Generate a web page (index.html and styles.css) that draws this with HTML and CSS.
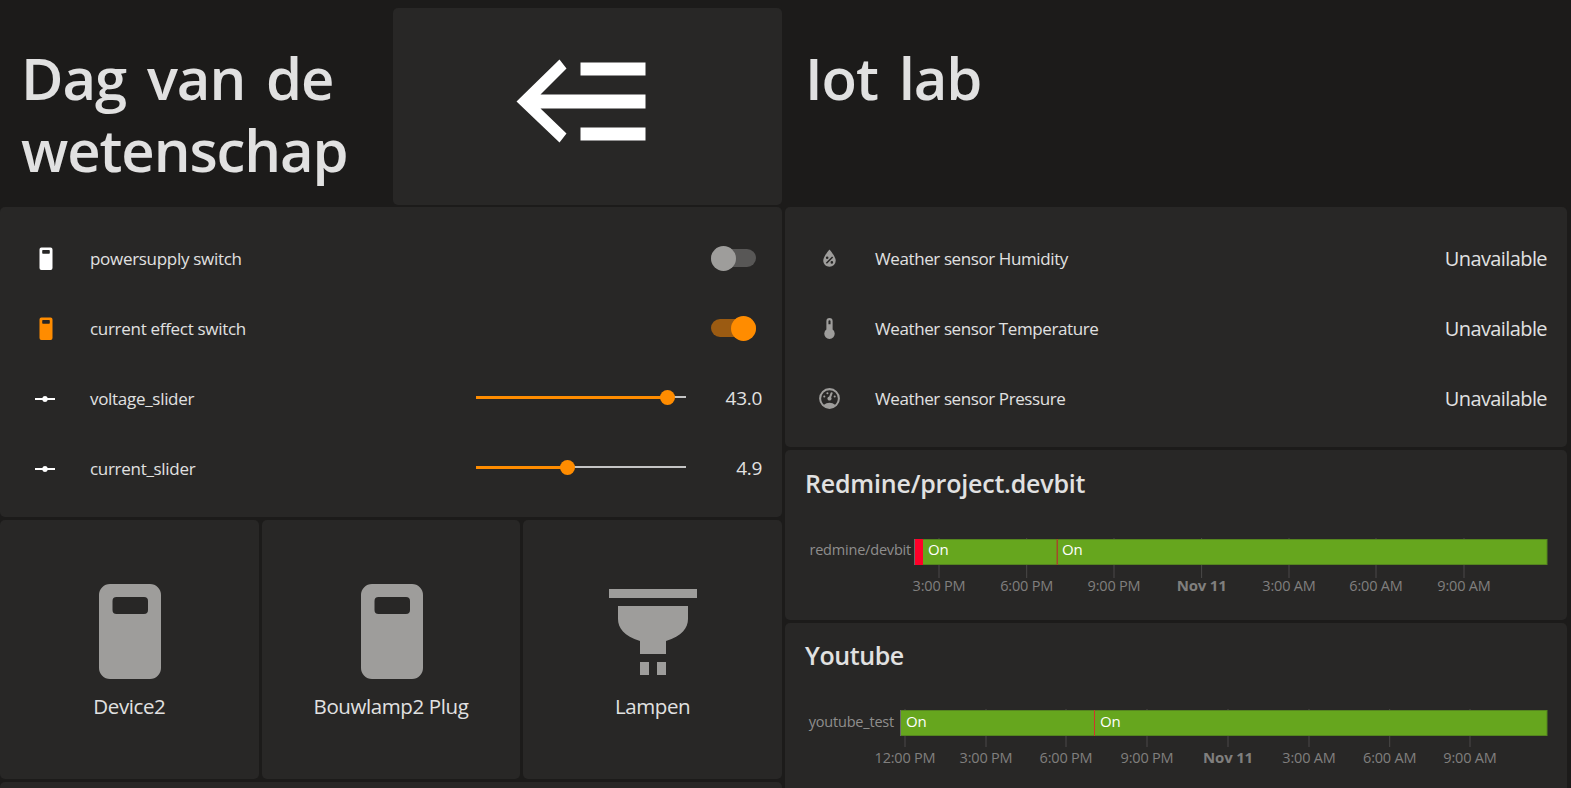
FILE: index.html
```html
<!DOCTYPE html>
<html>
<head>
	<meta charset="utf-8">
	<title>Dag van de wetenschap</title>
	<link rel="stylesheet" href="styles.css">
</head>
<body>
<div class="dashboard">
	<div class="column">
		<div class="top-row">
			<h1 class="big-title">Dag van de wetenschap</h1>
			<div class="card back-button">
				<svg class="back-icon" viewBox="0 0 160 160"><path d="M9.5 74.5 52.5 32.5 59.500 41.500 33.500 67.500H138.500V81.500H33.500L59.500 106.500 52.500 115.500ZM73.500 35.500H138.500V48.500H73.500ZM73.500 100.500H138.500V113.500H73.500Z"/></svg>
			</div>
		</div>

		<div class="card entities">
			<div class="row">
				<svg class="row-icon icon-white" viewBox="0 0 24 24"><path fill-rule="evenodd" d="M7.400 1.500H16.600A1.900 1.900 0 0 1 18.500 3.400V22.100A1.900 1.900 0 0 1 16.600 24H7.400A1.900 1.900 0 0 1 5.500 22.100V3.400A1.900 1.900 0 0 1 7.400 1.500ZM9 4A.8.8 0 0 0 8.200 4.800V7A.8.8 0 0 0 9 7.800H15A.8.8 0 0 0 15.800 7V4.800A.8.8 0 0 0 15 4Z"/></svg>
				<span class="row-name">powersupply switch</span>
				<span class="toggle"><span class="knob"></span></span>
			</div>
			<div class="row">
				<svg class="row-icon icon-orange" viewBox="0 0 24 24"><path fill-rule="evenodd" d="M7.400 1.500H16.600A1.900 1.900 0 0 1 18.500 3.400V22.100A1.900 1.900 0 0 1 16.600 24H7.400A1.900 1.900 0 0 1 5.500 22.100V3.400A1.900 1.900 0 0 1 7.400 1.500ZM9 4A.8.8 0 0 0 8.200 4.800V7A.8.8 0 0 0 9 7.800H15A.8.8 0 0 0 15.800 7V4.800A.8.8 0 0 0 15 4Z"/></svg>
				<span class="row-name">current effect switch</span>
				<span class="toggle on"><span class="knob"></span></span>
			</div>
			<div class="row">
				<svg class="row-icon icon-white" viewBox="1 -1 24 24"><path d="M2 11H9.300A2.800 2.800 0 0 1 14.700 11H22V13H14.700A2.800 2.800 0 0 1 9.300 13H2Z"/></svg>
				<span class="row-name">voltage_slider</span>
				<span class="slider"><span class="slider-fill" style="width: 91%"></span><span class="slider-thumb" style="left: 91%"></span></span>
				<span class="slider-value">43.0</span>
			</div>
			<div class="row">
				<svg class="row-icon icon-white" viewBox="1 -1 24 24"><path d="M2 11H9.300A2.800 2.800 0 0 1 14.700 11H22V13H14.700A2.800 2.800 0 0 1 9.300 13H2Z"/></svg>
				<span class="row-name">current_slider</span>
				<span class="slider"><span class="slider-fill" style="width: 43.5%"></span><span class="slider-thumb" style="left: 43.5%"></span></span>
				<span class="slider-value">4.9</span>
			</div>
		</div>

		<div class="tiles">
			<div class="card tile">
				<svg class="tile-icon" viewBox="0 0 120 120"><path fill-rule="evenodd" d="M41 12H81A11 11 0 0 1 92 23V96A11 11 0 0 1 81 107H41A11 11 0 0 1 30 96V23A11 11 0 0 1 41 12ZM47.500 25A4 4 0 0 0 43.500 29V38A4 4 0 0 0 47.500 42H75A4 4 0 0 0 79 38V29A4 4 0 0 0 75 25Z"/></svg>
				<span class="tile-name">Device2</span>
			</div>
			<div class="card tile">
				<svg class="tile-icon" viewBox="0 0 120 120"><path fill-rule="evenodd" d="M41 12H81A11 11 0 0 1 92 23V96A11 11 0 0 1 81 107H41A11 11 0 0 1 30 96V23A11 11 0 0 1 41 12ZM47.500 25A4 4 0 0 0 43.500 29V38A4 4 0 0 0 47.500 42H75A4 4 0 0 0 79 38V29A4 4 0 0 0 75 25Z"/></svg>
				<span class="tile-name">Bouwlamp2 Plug</span>
			</div>
			<div class="card tile">
				<svg class="tile-icon" viewBox="0 0 120 120"><path d="M16 17H104V26H16ZM25 34H95V47C95 56 89 64 73 69V82H47V69C31 64 25 56 25 47ZM47 90H56V103H47ZM64 90H73V103H64Z"/></svg>
				<span class="tile-name">Lampen</span>
			</div>
		</div>
		<div class="card stub"></div>
	</div>

	<div class="column">
		<div class="top-row">
			<h1 class="big-title iot-title">Iot lab</h1>
		</div>

		<div class="card entities sensors">
			<div class="row">
				<svg class="row-icon icon-gray" viewBox="0 0 24 24"><path d="M12,3.250C12,3.250 6,10 6,14C6,17.320 8.690,20 12,20A6,6 0 0,0 18,14C18,10 12,3.250 12,3.250M14.470,9.970L15.530,11.030L9.530,17.030L8.470,15.970M9.750,10A1.250,1.250 0 0,1 11,11.250A1.250,1.250 0 0,1 9.750,12.500A1.250,1.250 0 0,1 8.500,11.250A1.250,1.250 0 0,1 9.750,10M14.250,14.500A1.250,1.250 0 0,1 15.500,15.750A1.250,1.250 0 0,1 14.250,17A1.250,1.250 0 0,1 13,15.750A1.250,1.250 0 0,1 14.250,14.500Z"/></svg>
				<span class="row-name">Weather sensor Humidity</span>
				<span class="state">Unavailable</span>
			</div>
			<div class="row">
				<svg class="row-icon icon-gray" viewBox="0 0 24 24"><path d="M15 13V5A3 3 0 0 0 9 5V13A5 5 0 1 0 15 13M12 4A1 1 0 0 1 13 5V8H11V5A1 1 0 0 1 12 4Z"/></svg>
				<span class="row-name">Weather sensor Temperature</span>
				<span class="state">Unavailable</span>
			</div>
			<div class="row">
				<svg class="row-icon icon-gray" viewBox="0 0 24 24"><path d="M12,2A10,10 0 0,0 2,12A10,10 0 0,0 12,22A10,10 0 0,0 22,12A10,10 0 0,0 12,2M12,4A8,8 0 0,1 20,12C20,14.400 19,16.500 17.300,18C15.900,16.700 14,16 12,16C10,16 8.200,16.700 6.700,18C5,16.500 4,14.400 4,12A8,8 0 0,1 12,4M14,5.890C13.620,5.900 13.260,6.150 13.100,6.540L11.810,9.770L11.710,10C11,10.130 10.410,10.600 10.140,11.260C9.730,12.290 10.230,13.450 11.260,13.860C12.290,14.270 13.450,13.770 13.860,12.740C14.120,12.080 14,11.320 13.570,10.760L13.670,10.500L14.960,7.290L14.970,7.260C15.170,6.750 14.920,6.170 14.410,5.960C14.280,5.910 14.150,5.890 14,5.890M10,6A1,1 0 0,0 9,7A1,1 0 0,0 10,8A1,1 0 0,0 11,7A1,1 0 0,0 10,6M7,9A1,1 0 0,0 6,10A1,1 0 0,0 7,11A1,1 0 0,0 8,10A1,1 0 0,0 7,9M17,9A1,1 0 0,0 16,10A1,1 0 0,0 17,11A1,1 0 0,0 18,10A1,1 0 0,0 17,9Z"/></svg>
				<span class="row-name">Weather sensor Pressure</span>
				<span class="state">Unavailable</span>
			</div>
		</div>

		<div class="card chart-card chart-redmine">
			<h2 class="chart-title">Redmine/project.devbit</h2>
			<svg class="timeline" viewBox="0 0 782 100">
				<path class="ticks" d="M154 2V42M241.700 2V42M329 2V42M416.600 2V42M504 2V42M591 2V42M679 2V42"/>
				<rect class="bar-green" x="129.500" y="3.500" width="632.500" height="25"/>
				<rect class="bar-red" x="130" y="3" width="8" height="26"/>
				<rect class="bar-edge" x="129" y="3" width="1" height="26"/>
				<rect class="bar-cut" x="271.500" y="3" width="1.500" height="26"/>
				<text class="bar-label" x="143" y="19">On</text>
				<text class="bar-label" x="277" y="19">On</text>
				<text class="row-label" x="126" y="19" text-anchor="end">redmine/devbit</text>
				<text class="tick-label" x="154" y="55" text-anchor="middle">3:00 PM</text>
				<text class="tick-label" x="241.700" y="55" text-anchor="middle">6:00 PM</text>
				<text class="tick-label" x="329" y="55" text-anchor="middle">9:00 PM</text>
				<text class="tick-label bold" x="416.600" y="55" text-anchor="middle">Nov 11</text>
				<text class="tick-label" x="504" y="55" text-anchor="middle">3:00 AM</text>
				<text class="tick-label" x="591" y="55" text-anchor="middle">6:00 AM</text>
				<text class="tick-label" x="679" y="55" text-anchor="middle">9:00 AM</text>
			</svg>
		</div>

		<div class="card chart-card chart-youtube">
			<h2 class="chart-title">Youtube</h2>
			<svg class="timeline" viewBox="0 0 782 100">
				<path class="ticks" d="M120 2V40M201 2V40M281 2V40M362 2V40M443 2V40M524 2V40M604.700 2V40M685 2V40"/>
				<rect class="bar-green" x="115.500" y="3.500" width="646.500" height="25"/>
				<rect class="bar-edge" x="115" y="3" width="1" height="26"/>
				<rect class="bar-thin" x="309" y="3" width="1" height="26"/>
				<text class="bar-label" x="121" y="20">On</text>
				<text class="bar-label" x="315" y="20">On</text>
				<text class="row-label" x="109" y="20" text-anchor="end">youtube_test</text>
				<text class="tick-label" x="120" y="56" text-anchor="middle">12:00 PM</text>
				<text class="tick-label" x="201" y="56" text-anchor="middle">3:00 PM</text>
				<text class="tick-label" x="281" y="56" text-anchor="middle">6:00 PM</text>
				<text class="tick-label" x="362" y="56" text-anchor="middle">9:00 PM</text>
				<text class="tick-label bold" x="443" y="56" text-anchor="middle">Nov 11</text>
				<text class="tick-label" x="524" y="56" text-anchor="middle">3:00 AM</text>
				<text class="tick-label" x="604.700" y="56" text-anchor="middle">6:00 AM</text>
				<text class="tick-label" x="685" y="56" text-anchor="middle">9:00 AM</text>
			</svg>
		</div>
	</div>
</div>
</body>
</html>
```

FILE: styles.css
```css
html, body {
	height: 100%;
	overflow: hidden;
}

body {
	margin: 0;
	background-color: #1c1b1a;
	color: #e1e1e1;
	font-family: "Open Sans", sans-serif;
	letter-spacing: -0.4px;
}

.dashboard {
	display: grid;
	grid-template-columns: 782px 782px;
	column-gap: 3px;
	padding-top: 8px;
}

.column {
	display: flex;
	flex-direction: column;
	gap: 3px;
}

.card {
	background-color: #282726;
	border-radius: 5px;
}

.top-row {
	display: flex;
	height: 197px;
	margin-bottom: -1px;
	gap: 3px;
}

.big-title {
	width: 390px;
	margin: 0;
	padding: 34px 0 0 21px;
	box-sizing: border-box;
	font-size: 58px;
	font-weight: 600;
	line-height: 72px;
	letter-spacing: -1.1px;
	word-spacing: 7px;
}

.iot-title {
	width: auto;
	margin-left: -1px;
}

.back-button {
	flex: 1;
	display: flex;
	justify-content: center;
	align-items: flex-start;
	padding: 19px 2px 0 0;
}

.back-icon {
	width: 160px;
	height: 160px;
	fill: #fff;
}

/* rijen */
.entities {
	height: 310px;
	padding: 16px 20px 0 34px;
	box-sizing: border-box;
	letter-spacing: -0.3px;
}

.sensors {
	height: 240px;
	padding-left: 32px;
	letter-spacing: -0.4px;
}

.row {
	display: flex;
	align-items: center;
	height: 70px;
	font-size: 17px;
}

.row-icon {
	width: 24px;
	height: 24px;
	flex: none;
}

.sensors .row-icon {
	width: 25px;
	height: 25px;
}

.icon-white { fill: #fff; }
.icon-orange { fill: #ff8c00; }
.icon-gray { fill: #9e9d9b; }

.row-name {
	flex: 1;
	margin-left: 32px;
}

.sensors .row-name {
	margin-left: 33px;
}

.state {
	font-size: 20px;
	letter-spacing: -0.6px;
}

.toggle {
	position: relative;
	width: 45px;
	height: 18px;
	margin-right: 6px;
	border-radius: 9px;
	background-color: #585756;
}

.toggle .knob {
	position: absolute;
	left: 0;
	top: -3.5px;
	width: 25px;
	height: 25px;
	border-radius: 50%;
	background-color: #9e9d9b;
}

.toggle.on {
	background-color: #9b5b12;
}

.toggle.on .knob {
	left: 20px;
	background-color: #ff8c00;
}

.slider {
	position: relative;
	width: 210px;
	height: 2px;
	margin-top: -2px;
	background-color: #c4c4c4;
}

.slider-fill {
	display: block;
	position: relative;
	height: 3px;
	background-color: #ff8c00;
}

.slider-thumb {
	position: absolute;
	top: -6px;
	width: 15px;
	height: 15px;
	margin-left: -7px;
	border-radius: 50%;
	background-color: #ff8c00;
}

.slider-value {
	width: 76px;
	text-align: right;
	font-size: 19px;
}

/* tegels */
.tiles {
	display: grid;
	grid-template-columns: repeat(3, 1fr);
	gap: 3px;
	height: 259px;
}

.tile {
	display: flex;
	flex-direction: column;
	align-items: center;
	padding-top: 52px;
}

.tile-icon {
	width: 120px;
	height: 120px;
	fill: #9e9d9b;
}

.tile-name {
	font-size: 20.5px;
}

.stub {
	height: 40px;
}

/* grafieken */
.chart-card {
	height: 170px;
	padding-top: 16px;
	box-sizing: border-box;
}

.chart-youtube {
	height: 200px;
	padding-top: 15px;
}

.chart-title {
	margin: 0 0 0 20px;
	font-size: 25px;
	line-height: 34px;
	font-weight: 600;
}

.chart-redmine .chart-title {
	letter-spacing: -0.2px;
}

.timeline {
	display: block;
	width: 782px;
	height: 100px;
	margin-top: 36px;
}

.chart-youtube .timeline {
	margin-top: 35px;
}

.timeline text {
	letter-spacing: -0.2px;
}

.ticks {
	stroke: #4a4948;
	stroke-width: 1;
	fill: none;
}

.bar-green {
	fill: #66a61e;
	stroke: #55851f;
	stroke-width: 1;
}

.bar-red { fill: #ff0029; }
.bar-edge { fill: #6b6a69; }
.bar-cut { fill: #a3492a; }
.bar-thin { fill: #d0342c; }

.bar-label {
	fill: #fff;
	font-size: 15px;
}

.row-label {
	fill: #8f8e8d;
	font-size: 14.5px;
}

.tick-label {
	fill: #807f7e;
	font-size: 14.5px;
}

.tick-label.bold {
	font-size: 15px;
	font-weight: 700;
}
```
